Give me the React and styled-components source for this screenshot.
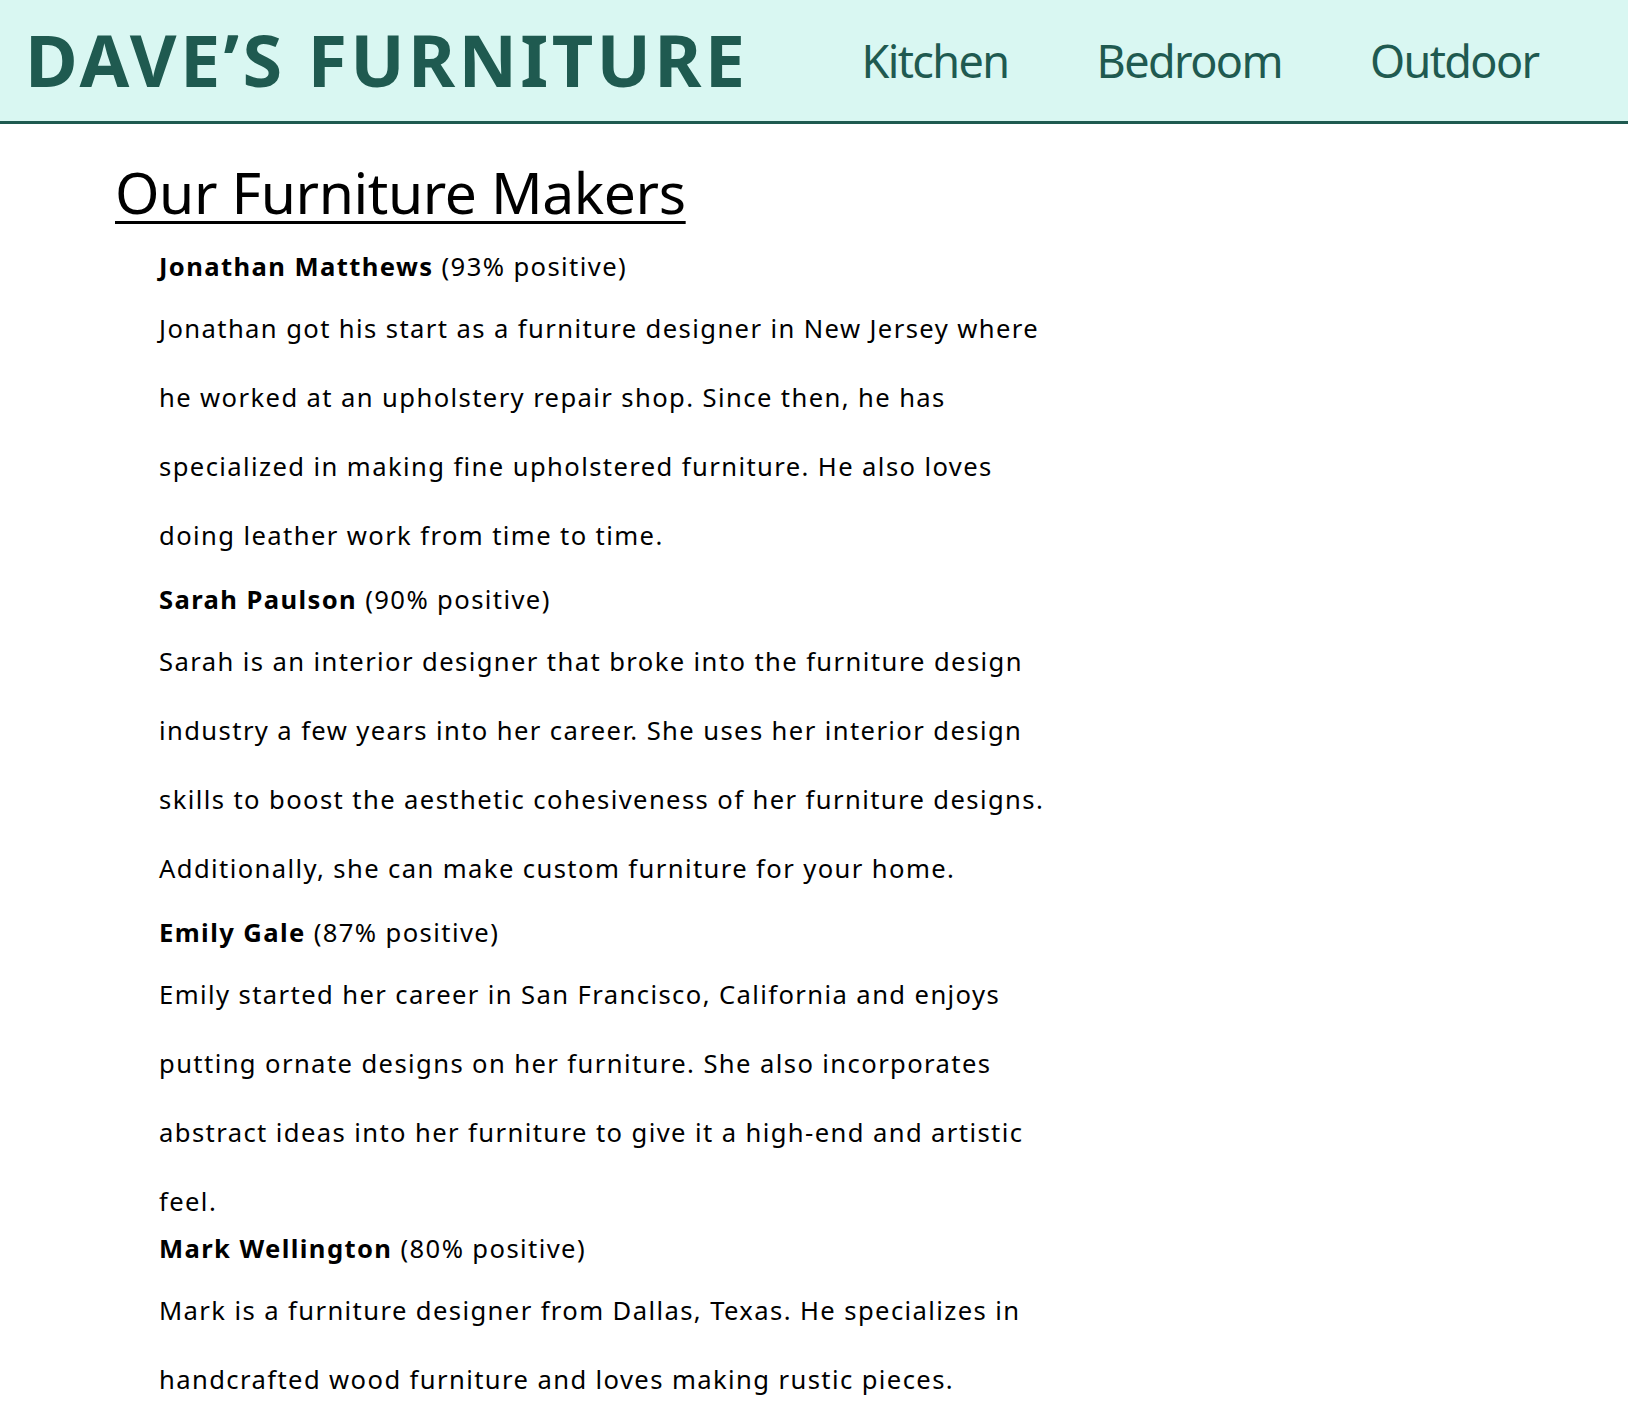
import styled, { createGlobalStyle } from 'styled-components';

const makers = [
  {
    name: 'Jonathan Matthews',
    rating: 93,
    bio: 'Jonathan got his start as a furniture designer in New Jersey where he worked at an upholstery repair shop. Since then, he has specialized in making fine upholstered furniture. He also loves doing leather work from time to time.',
    after: 12,
  },
  {
    name: 'Sarah Paulson',
    rating: 90,
    bio: 'Sarah is an interior designer that broke into the furniture design industry a few years into her career. She uses her interior design skills to boost the aesthetic cohesiveness of her furniture designs. Additionally, she can make custom furniture for your home.',
    after: 12,
  },
  {
    name: 'Emily Gale',
    rating: 87,
    bio: 'Emily started her career in San Francisco, California and enjoys putting ornate designs on her furniture. She also incorporates abstract ideas into her furniture to give it a high-end and artistic feel.',
    after: -5,
  },
  {
    name: 'Mark Wellington',
    rating: 80,
    bio: 'Mark is a furniture designer from Dallas, Texas. He specializes in handcrafted wood furniture and loves making rustic pieces.',
    after: 12,
  },
];

const App = () => {
  return (
    <>
      <GlobalStyle />
      <Header>
        <Logo>DAVE’S FURNITURE</Logo>
        <Nav>
          <NavLink href='#'>Kitchen</NavLink>
          <NavLink href='#'>Bedroom</NavLink>
          <NavLink href='#'>Outdoor</NavLink>
        </Nav>
      </Header>
      <Main>
        <Title>Our Furniture Makers</Title>
        <MakerList>
          {makers.map((m) => (
            <Maker key={m.name}>
              <MakerName>
                <strong>{m.name}</strong> ({m.rating}% positive)
              </MakerName>
              <Bio $after={m.after}>{m.bio}</Bio>
            </Maker>
          ))}
        </MakerList>
      </Main>
    </>
  );
};

const GlobalStyle = createGlobalStyle`
  body {
    margin: 0;
    font-family: 'Noto Sans', 'Open Sans', sans-serif;
    color: #000;
    background: #fff;
  }
`;

const Header = styled.header`
  display: flex;
  align-items: center;
  height: 121px;
  padding-left: 25px;
  background: #d9f7f2;
  border-bottom: 3px solid #1f5a50;
`;

const Logo = styled.h1`
  margin: -3px 0 0;
  font-size: 72px;
  font-weight: 700;
  letter-spacing: 3.3px;
  color: #1f5a50;
  white-space: nowrap;
`;

const Nav = styled.nav`
  display: flex;
  gap: 88px;
  margin-left: 113px;
  margin-top: -1px;
`;

const NavLink = styled.a`
  font-size: 45px;
  letter-spacing: -1.6px;
  color: #1f5a50;
  text-decoration: none;
`;

const Main = styled.main`
  padding: 0 115px;
`;

const Title = styled.h2`
  margin: 29px 0 18px;
  font-size: 57px;
  font-weight: 400;
  letter-spacing: -0.4px;
  text-decoration: underline;
  text-decoration-thickness: 3px;
  text-underline-offset: 7px;
`;

const MakerList = styled.div`
  display: flex;
  flex-direction: column;
  padding-left: 44px;
`;

const Maker = styled.section`
  display: flex;
  flex-direction: column;
  max-width: 905px;
  font-size: 25.6px;
  letter-spacing: 1.4px;
`;

const MakerName = styled.p`
  margin: 0;
`;

const Bio = styled.p`
  margin: 10px 0 ${(p) => p.$after}px;
  line-height: 69px;
`;

export default App;
